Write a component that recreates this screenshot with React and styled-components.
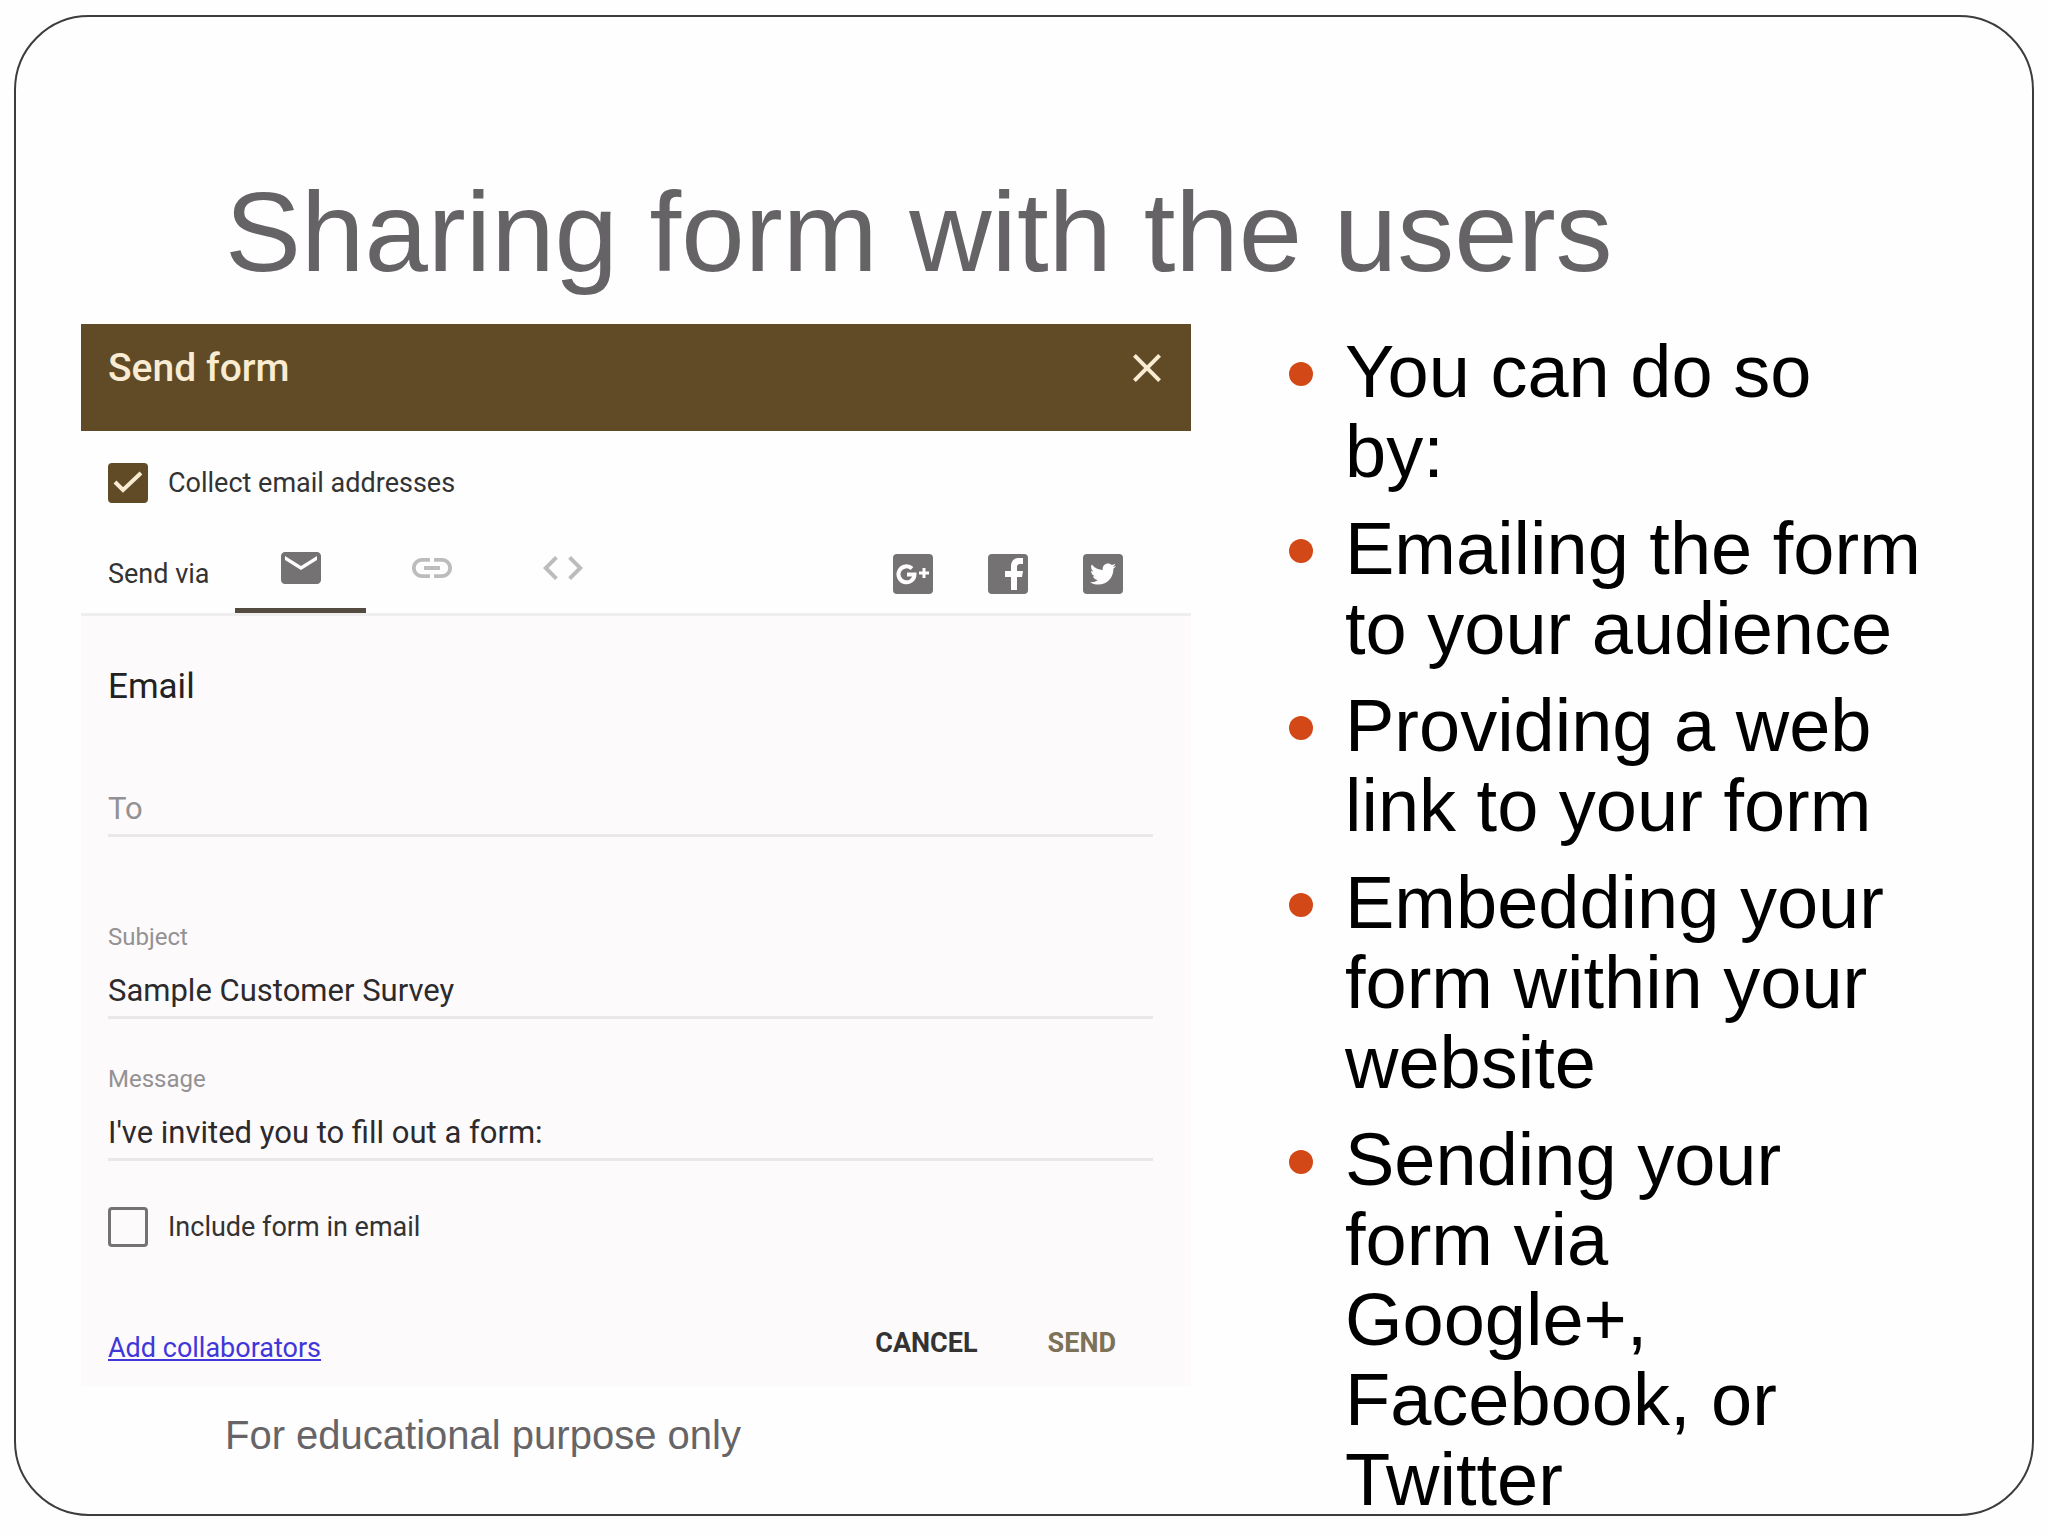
import React, { useState } from "react";
import styled, { createGlobalStyle } from "styled-components";
import { MdClose, MdCode, MdEmail, MdLink } from "react-icons/md";
import { FaTwitter } from "react-icons/fa";

const brown = "#604b26";
const cream = "#f9ecd3";
const grey = "#757274";

const points = [
  "You can do so by:",
  "Emailing the form to your audience",
  "Providing a web link to your form",
  "Embedding your form within your website",
  "Sending your form via Google+, Facebook, or Twitter",
];

const tabs = [
  { id: "email", label: "Email", Icon: MdEmail },
  { id: "link", label: "Link", Icon: MdLink },
  { id: "embed", label: "Embed HTML", Icon: MdCode },
];

const GooglePlusIcon = () => (
  <svg width="40" height="40" viewBox="0 0 40 40" aria-hidden="true">
    <rect width="40" height="40" rx="4" fill={grey} />
    <path
      d="M19 14.5A8 8 0 1 0 21.5 20.5H14"
      fill="none"
      stroke="#fff"
      strokeWidth="4"
    />
    <path d="M26 19h10M31 14v10" stroke="#fff" strokeWidth="3" />
  </svg>
);

const FacebookIcon = () => (
  <svg width="40" height="40" viewBox="0 0 40 40" aria-hidden="true">
    <rect width="40" height="40" rx="4" fill={grey} />
    <path
      d="M23 36V23h-6v-6h6v-4c0-6 3-9 8-9h4v6h-3c-2 0-3 1-3 3v4h6l-1 6h-5v13z"
      fill="#fff"
    />
  </svg>
);

const TwitterIcon = () => (
  <svg width="40" height="40" viewBox="0 0 40 40" aria-hidden="true">
    <rect width="40" height="40" rx="4" fill={grey} />
    <FaTwitter x="7" y="7" size={26} color="#fff" />
  </svg>
);

const CheckOption = ({ id, label, defaultChecked }) => (
  <CheckRow htmlFor={id}>
    <CheckCell>
      <CheckBox id={id} type="checkbox" defaultChecked={defaultChecked} />
      <svg width="40" height="40" viewBox="0 0 40 40" aria-hidden="true">
        <path d="M7 19l8 8L33 10" fill="none" stroke={cream} strokeWidth="4" />
      </svg>
    </CheckCell>
    {label}
  </CheckRow>
);

const SendForm = () => {
  const [active, setActive] = useState("email");

  return (
    <Card>
      <CardHeader>
        <CardTitle>Send form</CardTitle>
        <CloseButton type="button" aria-label="Close">
          <MdClose size={48} />
        </CloseButton>
      </CardHeader>
      <Options>
        <CheckOption
          id="collect"
          label="Collect email addresses"
          defaultChecked
        />
      </Options>
      <SendVia>
        <SendLabel>Send via</SendLabel>
        <TabList role="tablist">
          {tabs.map(({ id, label, Icon }) => (
            <TabButton
              key={id}
              type="button"
              role="tab"
              aria-label={label}
              aria-selected={active === id}
              $active={active === id}
              onClick={() => setActive(id)}
            >
              <Icon size={48} />
            </TabButton>
          ))}
        </TabList>
        <Social>
          <IconButton type="button" aria-label="Share on Google+">
            <GooglePlusIcon />
          </IconButton>
          <IconButton type="button" aria-label="Share on Facebook">
            <FacebookIcon />
          </IconButton>
          <IconButton type="button" aria-label="Share on Twitter">
            <TwitterIcon />
          </IconButton>
        </Social>
      </SendVia>
      <Body onSubmit={(e) => e.preventDefault()}>
        <SectionTitle>Email</SectionTitle>
        <ToInput type="text" placeholder="To" aria-label="To" />
        <Fields>
          <Field>
            <FieldLabel htmlFor="subject">Subject</FieldLabel>
            <FieldInput
              id="subject"
              type="text"
              defaultValue="Sample Customer Survey"
            />
          </Field>
          <Field>
            <FieldLabel htmlFor="message">Message</FieldLabel>
            <FieldInput
              id="message"
              type="text"
              defaultValue="I've invited you to fill out a form:"
            />
          </Field>
          <CheckOption id="include" label="Include form in email" />
        </Fields>
        <CardFooter>
          <Collaborators href="#">Add collaborators</Collaborators>
          <Actions>
            <ActionButton type="button">CANCEL</ActionButton>
            <ActionButton type="submit" $primary>
              SEND
            </ActionButton>
          </Actions>
        </CardFooter>
      </Body>
    </Card>
  );
};

const App = () => (
  <>
    <GlobalStyle />
    <Page>
      <Slide>
        <Title>Sharing form with the users</Title>
        <Columns>
          <div>
            <SendForm />
            <Note>For educational purpose only</Note>
          </div>
          <Points>
            {points.map((point) => (
              <Point key={point}>{point}</Point>
            ))}
          </Points>
        </Columns>
      </Slide>
    </Page>
  </>
);

const GlobalStyle = createGlobalStyle`
  * {
    box-sizing: border-box;
  }
  body {
    margin: 0;
    background: #fefefe;
    font-family: "Liberation Sans", Arial, sans-serif;
  }
  button,
  input {
    margin: 0;
    padding: 0;
    border: none;
    background: none;
    font-family: inherit;
  }
  button {
    cursor: pointer;
  }
  svg {
    display: block;
  }
`;

const Page = styled.main`
  display: flex;
  min-height: 100vh;
  padding: 15px 14px 20px;
`;

const Slide = styled.section`
  flex: 1;
  padding: 149px 106px 0 65px;
  border: 2px solid #3c3c3c;
  border-radius: 75px;
`;

const Title = styled.h1`
  margin: 0 0 26px 144px;
  color: #656366;
  font-size: 114px;
  font-weight: 400;
  line-height: 132px;
`;

const Columns = styled.div`
  display: grid;
  grid-template-columns: minmax(0, 1110fr) minmax(0, 637fr);
  column-gap: 98px;
`;

const Note = styled.p`
  margin: 25px 0 0 144px;
  color: #666467;
  font-size: 40px;
  line-height: 48px;
`;

/* the last line runs down to the slide border */
const Points = styled.ul`
  display: flex;
  flex-direction: column;
  gap: 17px;
  margin: 8px 0 -8px;
  padding: 0;
  list-style: none;
`;

const Point = styled.li`
  display: grid;
  grid-template-columns: 24px minmax(0, 1fr);
  column-gap: 32px;
  color: #000;
  font-size: 74px;
  line-height: 80px;

  &::before {
    content: "";
    height: 24px;
    margin-top: 30px;
    border-radius: 50%;
    background: #d34817;
  }
`;

const Card = styled.section`
  font-family: Roboto, sans-serif;
  font-size: 27px;
  color: #333;
`;

const CardHeader = styled.header`
  display: flex;
  justify-content: space-between;
  align-items: center;
  padding: 20px 20px 39px 27px;
  background: ${brown};
  color: ${cream};
`;

const CardTitle = styled.h2`
  margin: 0;
  font-size: 39px;
  font-weight: 500;
  line-height: 44px;
`;

const CloseButton = styled.button`
  color: inherit;
`;

const Options = styled.div`
  padding: 32px 27px 31px;
`;

const CheckRow = styled.label`
  display: flex;
  align-items: center;
  gap: 20px;
  line-height: 40px;
`;

const CheckCell = styled.span`
  display: grid;

  > * {
    grid-area: 1 / 1;
  }
  svg {
    pointer-events: none;
    visibility: hidden;
  }
  input:checked + svg {
    visibility: visible;
  }
`;

const CheckBox = styled.input`
  appearance: none;
  width: 40px;
  height: 40px;
  border: 3px solid ${grey};
  border-radius: 4px;

  &:checked {
    border-color: ${brown};
    background: ${brown};
  }
`;

const SendVia = styled.div`
  display: flex;
  align-items: center;
  height: 82px;
  padding: 0 68px 0 27px;
  border-bottom: 3px solid #efedee;
`;

const SendLabel = styled.span`
  width: 127px;
`;

const TabList = styled.div`
  display: flex;
  align-self: stretch;
`;

const TabButton = styled.button`
  display: flex;
  justify-content: center;
  align-items: center;
  width: 131px;
  border-bottom: 5px solid ${(p) => (p.$active ? "#544b40" : "transparent")};
  padding-bottom: 6px;
  color: ${(p) => (p.$active ? grey : "#bdbbbd")};
`;

const Social = styled.div`
  display: flex;
  gap: 55px;
  margin-left: auto;
`;

const IconButton = styled.button`
  line-height: 0;
`;

const Body = styled.form`
  padding: 49px 38px 20px 27px;
  background: #fcfafb;
`;

const SectionTitle = styled.h3`
  margin: 0 0 79px;
  color: #222;
  font-size: 35px;
  font-weight: 400;
  line-height: 44px;
`;

const FieldInput = styled.input`
  display: block;
  width: 100%;
  height: 49px;
  padding-bottom: 6px;
  border-bottom: 3px solid #e9e7e8;
  color: #2c2a2c;
  font-size: 31px;
  outline: none;

  &::placeholder {
    color: #939193;
    opacity: 1;
  }
`;

const ToInput = styled(FieldInput)`
  margin-bottom: 86px;
`;

const Fields = styled.div`
  display: flex;
  flex-direction: column;
  gap: 46px;
`;

const Field = styled.div`
  display: flex;
  flex-direction: column;
  gap: 19px;
`;

const FieldLabel = styled.label`
  color: #939193;
  font-size: 24px;
  line-height: 28px;
`;

const CardFooter = styled.footer`
  display: flex;
  justify-content: space-between;
  align-items: flex-end;
  margin-top: 78px;
  padding-right: 37px;
`;

const Collaborators = styled.a`
  color: #4036da;
  line-height: 36px;
`;

const Actions = styled.div`
  display: flex;
  gap: 70px;
  margin-bottom: 5px;
`;

const ActionButton = styled.button`
  color: ${(p) => (p.$primary ? "#7d7158" : "#333")};
  font-size: 27px;
  font-weight: 700;
  line-height: 36px;
`;

export default App;
